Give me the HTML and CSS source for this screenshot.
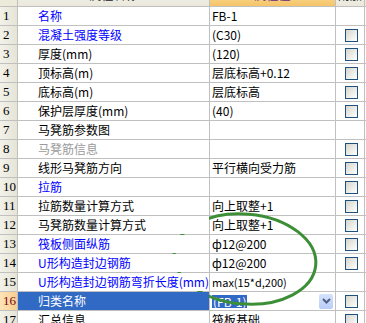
FILE: index.html
```html
<!DOCTYPE html>
<html lang="zh-CN">
<head>
    <meta charset="UTF-8">
    <title>属性编辑</title>
    <link rel="stylesheet" href="styles.css">
</head>
<body>
<div class="page">
    <div class="grid">
        <div class="row head">
            <div class="num"></div>
            <div class="hname">属性名称</div>
            <div class="hval">属性值</div>
            <div class="hext">附加</div>
            <div class="hrest"></div>
        </div>
        <div class="row"><div class="num">1</div><div class="name blue">名称</div><div class="val">FB-1</div><div class="chk"></div><div class="rest"></div></div>
        <div class="row"><div class="num">2</div><div class="name blue">混凝土强度等级</div><div class="val">(C30)</div><div class="chk"><span class="box"></span></div><div class="rest"></div></div>
        <div class="row"><div class="num">3</div><div class="name">厚度(mm)</div><div class="val">(120)</div><div class="chk"><span class="box"></span></div><div class="rest"></div></div>
        <div class="row"><div class="num">4</div><div class="name">顶标高(m)</div><div class="val">层底标高+0.12</div><div class="chk"><span class="box"></span></div><div class="rest"></div></div>
        <div class="row"><div class="num">5</div><div class="name">底标高(m)</div><div class="val">层底标高</div><div class="chk"><span class="box"></span></div><div class="rest"></div></div>
        <div class="row"><div class="num">6</div><div class="name">保护层厚度(mm)</div><div class="val">(40)</div><div class="chk"><span class="box"></span></div><div class="rest"></div></div>
        <div class="row"><div class="num">7</div><div class="name">马凳筋参数图</div><div class="val"></div><div class="chk"></div><div class="rest"></div></div>
        <div class="row"><div class="num">8</div><div class="name gray">马凳筋信息</div><div class="val"></div><div class="chk"><span class="box"></span></div><div class="rest"></div></div>
        <div class="row"><div class="num">9</div><div class="name">线形马凳筋方向</div><div class="val">平行横向受力筋</div><div class="chk"><span class="box"></span></div><div class="rest"></div></div>
        <div class="row"><div class="num">10</div><div class="name blue">拉筋</div><div class="val"></div><div class="chk"><span class="box"></span></div><div class="rest"></div></div>
        <div class="row"><div class="num">11</div><div class="name">拉筋数量计算方式</div><div class="val">向上取整+1</div><div class="chk"><span class="box"></span></div><div class="rest"></div></div>
        <div class="row"><div class="num">12</div><div class="name">马凳筋数量计算方式</div><div class="val">向上取整+1</div><div class="chk"><span class="box"></span></div><div class="rest"></div></div>
        <div class="row"><div class="num">13</div><div class="name blue">筏板侧面纵筋</div><div class="val">ф12@200</div><div class="chk"><span class="box"></span></div><div class="rest"></div></div>
        <div class="row"><div class="num">14</div><div class="name blue">U形构造封边钢筋</div><div class="val">ф12@200</div><div class="chk"><span class="box"></span></div><div class="rest"></div></div>
        <div class="row"><div class="num">15</div><div class="name blue">U形构造封边钢筋弯折长度(mm)</div><div class="val small">max(15*d,200)</div><div class="chk"></div><div class="rest"></div></div>
        <div class="row current">
            <div class="num">16</div>
            <div class="name">归类名称</div>
            <div class="val edit">
                <span class="sel">(FB-1)</span>
                <span class="drop">
                    <svg width="9" height="6" viewBox="0 0 9 6"><path d="M1 1 L4.5 4.5 L8 1" fill="none" stroke="#4d6185" stroke-width="2"/></svg>
                </span>
            </div>
            <div class="chk"><span class="box"></span></div>
            <div class="rest"></div>
        </div>
        <div class="row"><div class="num">17</div><div class="name">汇总信息</div><div class="val">筏板基础</div><div class="chk"><span class="box"></span></div><div class="rest"></div></div>
    </div>

    <svg class="mark" width="366" height="323" viewBox="0 0 366 323">
        <ellipse cx="245" cy="259" rx="71" ry="45" transform="rotate(5 245 259)" fill="none" stroke="#3c8f36" stroke-width="3"/>
    </svg>
</div>
</body>
</html>
```

FILE: styles.css
```css
body {
    margin: 0;
    background: #fff;
}

.page {
    position: relative;
    width: 366px;
    height: 323px;
    overflow: hidden;
}

.grid {
    display: flex;
    flex-direction: column;
    gap: 1px;
    background: #c0c0c0;
    margin-top: -12px;
    font-family: "Noto Sans CJK SC", sans-serif;
    font-size: 12px;
    color: #000;
}

.row {
    display: grid;
    grid-template-columns: 17px 191px 125px 28px 1fr;
    column-gap: 1px;
    height: 18px;
}

.row > div {
    background: #fff;
    display: flex;
    align-items: center;
    line-height: 18px;
    white-space: nowrap;
    overflow: visible;
}

.num {
    background: linear-gradient(to right, #f3f2ea, #e6e4d6) !important;
    padding-left: 3px;
    font-family: "Liberation Serif", serif;
    font-size: 13px;
    color: #000;
}

.name {
    padding-left: 20px;
    position: relative;
    z-index: 1;
}

.val {
    padding-left: 2px;
}

.val.small {
    font-size: 11px;
}

.blue {
    color: #0000ff;
}

.gray {
    color: #9a9a9a;
}

.chk {
    padding-left: 9px;
}

.box {
    display: block;
    width: 11px;
    height: 11px;
    border: 1px solid #1c5180;
    background: linear-gradient(135deg, #d6d5cc, #ffffff);
}

/* header, only its lower part shows */
.head {
    height: 18px;
}

.head > div {
    justify-content: center;
    align-items: flex-end;
    line-height: 16px;
    padding-bottom: 3px;
    color: #222;
    overflow: hidden;
}

.head .num {
    background: #ecead8 !important;
}

.head .hname {
    background: linear-gradient(#f4f3ec, #ebe9dc);
}

.head .hval {
    background: linear-gradient(#fbe3a6, #f5c468);
    color: #6b1f7a;
}

.head .hext {
    background: linear-gradient(#f4f3ec, #ebe9dc);
    justify-content: flex-start;
    padding-left: 2px;
}

.head .hrest {
    background: #ecead8;
}

/* current row */
.current .num {
    background: linear-gradient(to right, #fde3b8, #f8cf8e) !important;
    color: #7a0010;
}

.current .name {
    background: #316ac5 !important;
    color: #fff;
}

.edit {
    justify-content: space-between;
    padding-right: 2px;
}

.sel {
    background: #316ac5;
    color: #fff;
    line-height: 13px;
    padding: 0 1px;
}

.drop {
    display: flex;
    align-items: center;
    justify-content: center;
    width: 14px;
    height: 15px;
    background: linear-gradient(#d6e2fc, #b8cdf8);
    border-radius: 2px;
}

.mark {
    position: absolute;
    left: 0;
    top: 0;
    pointer-events: none;
}
```
